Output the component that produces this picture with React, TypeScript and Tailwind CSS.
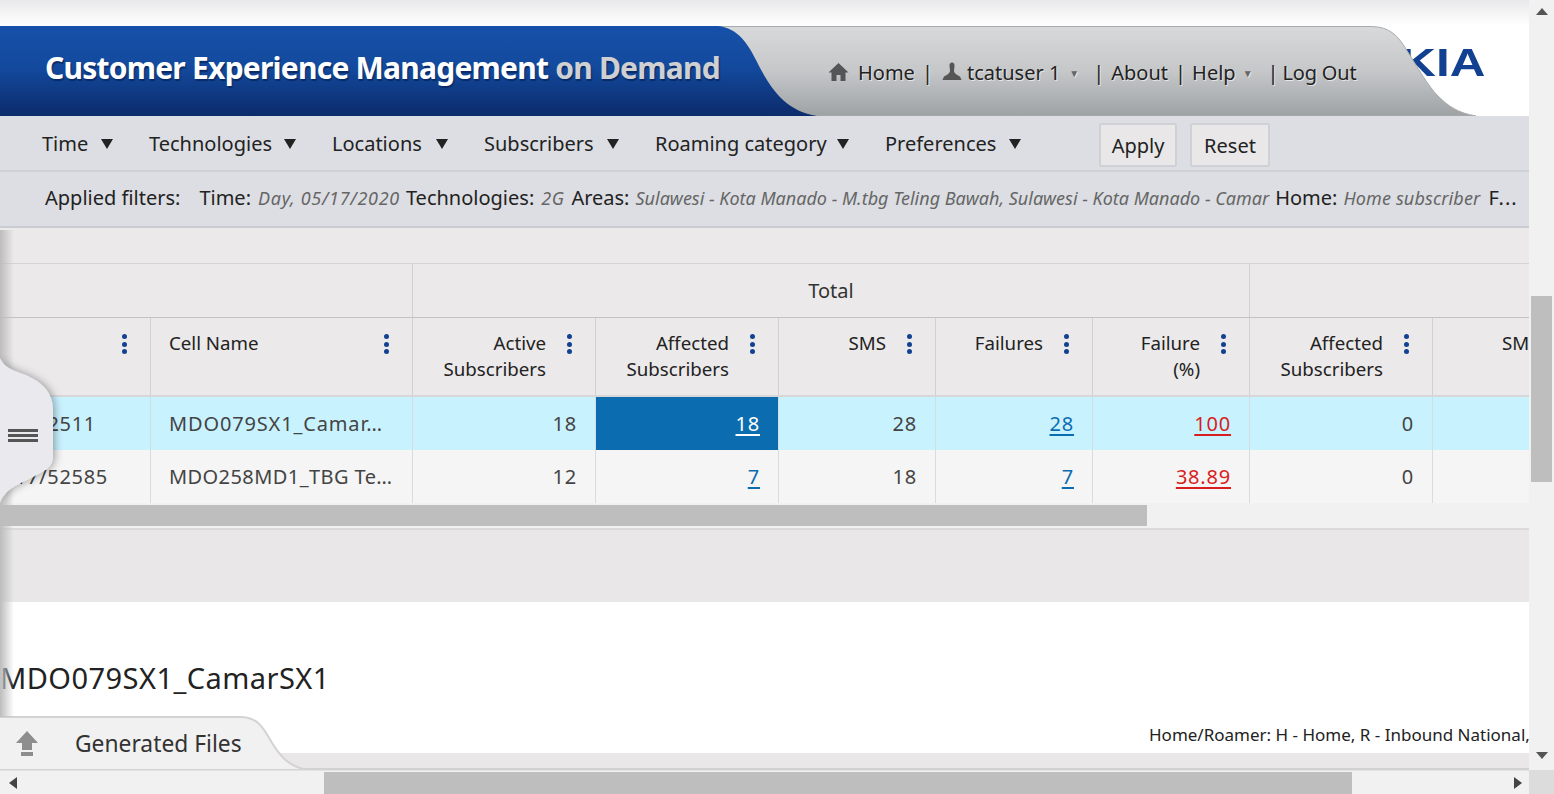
import { Fragment, type ReactNode } from 'react'

const font = { fontFamily: '"Noto Sans", "Open Sans", sans-serif' }

const menus = [
  ['Time', 'w-[47px]'],
  ['Technologies', 'w-[123px]'],
  ['Locations', 'w-[92px]'],
  ['Subscribers', 'w-[111px]'],
  ['Roaming category', 'w-[170px]'],
  ['Preferences', 'w-[112px]'],
]

const filters = [
  ['Time:', 'Day, 05/17/2020', 'mr-[7px]', 'mr-[6px] tracking-[0.7px]'],
  ['Technologies:', '2G', 'mr-[7px]', 'mr-[7px] tracking-[0.5px]'],
  ['Areas:', 'Sulawesi - Kota Manado - M.tbg Teling Bawah, Sulawesi - Kota Manado - Camar', 'mr-[6px]', 'mr-[6px]'],
  ['Home:', 'Home subscriber', 'mr-[6px]', 'mr-[8px] tracking-[0.15px]'],
]

const colGrid = 'grid grid-cols-[151px_262px_183px_183px_157px_157px_157px_183px_96px]'

function Dots() {
  return (
    <span className="flex w-[5px] flex-col gap-[2.5px] pt-1">
      <i className="size-[5px] rounded-full bg-[#124191]" />
      <i className="size-[5px] rounded-full bg-[#124191]" />
      <i className="size-[5px] rounded-full bg-[#124191]" />
    </span>
  )
}

function HeadCell({ children, left }: { children?: ReactNode; left?: boolean }) {
  return (
    <div className="flex h-[77px] justify-end gap-[21px] overflow-hidden border-r border-[#d2d0d2] pr-[23px] pt-[12px] text-[18.7px] leading-[26px] text-[#222]">
      <div className={left ? 'flex-1 pl-[18px] text-left' : 'text-right'}>{children}</div>
      <Dots />
    </div>
  )
}

function Num({ v, link, red, active }: { v: string; link?: boolean; red?: boolean; active?: boolean }) {
  const color = active ? 'text-white bg-[#0b6db0]' : red ? 'text-[#d81e1e]' : link ? 'text-[#0b6db0]' : 'text-[#444]'
  return (
    <div className={`flex items-center justify-end border-r border-[#d6dde0] pr-[18px] text-[20px] tracking-[0.8px] ${color}`}>
      <span className={link || red ? 'underline underline-offset-[3px]' : ''}>{v}</span>
    </div>
  )
}

function Row({ bg, id, idPad, cell, cellTrack, vals }: { bg: string; id: string; idPad: string; cell: string; cellTrack: string; vals: ReactNode }) {
  return (
    <div className={`${colGrid} h-[53px] ${bg}`}>
      <div className={`flex items-center justify-end overflow-hidden whitespace-nowrap border-r border-[#d6dde0] text-[20px] tracking-[0.7px] text-[#444] ${idPad}`}>{id}</div>
      <div className={`flex items-center border-r border-[#d6dde0] pl-[18px] text-[20px] text-[#444] ${cellTrack}`}>{cell}</div>
      {vals}
      <div />
    </div>
  )
}

export default function App() {
  return (
    <div className="relative flex h-[794px] w-[1554px] overflow-hidden bg-white" style={font}>
      <div className="flex w-[1529px] flex-col">
        <div className="h-[26px] bg-gradient-to-b from-[#e9e9eb] to-white" />

        <header className="relative h-[90px]">
          {/* logo sits behind the grey tab, only the end of it shows */}
          <span className="absolute right-[44px] top-[15px] origin-right scale-x-[1.3] font-['Liberation_Sans'] text-[38px] font-bold leading-[44px] text-[#124191]">KIA</span>
          <svg className="absolute inset-0" width="1529" height="90" viewBox="0 0 1529 90">
            <defs>
              <linearGradient id="blue" x1="0" y1="0" x2="0" y2="1">
                <stop offset="0" stopColor="#1650a8" />
                <stop offset="0.45" stopColor="#134a9e" />
                <stop offset="1" stopColor="#0c2b6b" />
              </linearGradient>
              <linearGradient id="gray" x1="0" y1="0" x2="0" y2="1">
                <stop offset="0" stopColor="#d8d9db" />
                <stop offset="0.5" stopColor="#c5c7c9" />
                <stop offset="1" stopColor="#9ea2a5" />
              </linearGradient>
            </defs>
            <path d="M700 0.5H1372C1390 1 1398 10 1406 23C1418 42 1428 60 1438 70C1448 80 1458 87 1476 90H700Z" fill="url(#gray)" stroke="#a8aaac" />
            <path d="M0 0H718C738 2 748 18 756 34C770 62 785 85 817 90H0Z" fill="url(#blue)" />
          </svg>
          <div className="relative flex h-full items-start">
            <h1 className="ml-[45px] mt-[20px] text-[30px] font-bold leading-[44px] tracking-[-0.77px] text-white [text-shadow:1px_2px_1px_#0a2a66]">
              Customer Experience Management <span className="text-[#cfd0d2]">on Demand</span>
            </h1>
            <nav className="absolute left-[828px] top-[33px] flex items-center text-[20px] leading-[28px] text-[#222] [text-shadow:1px_1px_0_#e5e5e5]">
              <svg width="21" height="20" viewBox="0 0 21 20" className="mb-[3px] mr-[9px]" fill="#555">
                <path d="M10.5 1 20.5 10.5H17.5V19H12.500V13H8.500V19H3.500V10.500H.5Z" />
              </svg>
              <span>Home</span>
              <span className="ml-[7px] mr-[9px]">|</span>
              <svg width="20" height="20" viewBox="0 0 20 20" className="mb-[3px] mr-[5px]" fill="#555">
                <path d="M7.500 3.500C7.500 1.500 8.500 0.500 10 0.500S12.500 1.500 12.500 3.500 12 7 12 9C12 11 15 13 18 14.500L19.500 18H.5L2 14.500C5 13 8 11 8 9 8 7 7.500 5.500 7.500 3.500Z" />
              </svg>
              <span>tcatuser 1</span>
              <span className="ml-[9px] mr-[14px] text-[10px] text-[#666]">▼</span>
              <span className="mr-[7px]">|</span>
              <span>About</span>
              <span className="ml-[7px] mr-[6px]">|</span>
              <span>Help</span>
              <span className="ml-[7px] mr-[15px] text-[10px] text-[#666]">▼</span>
              <span className="mr-[4px]">|</span>
              <span className="-tracking-[0.2px]">Log Out</span>
            </nav>
          </div>
        </header>

        <div className="flex h-[56px] items-start border-b-2 border-[#cdd0d6] bg-[#dcdee3] text-[20px] text-[#222]">
          <div className="ml-[42px] mt-[12px] flex w-[1057px] gap-[36px] leading-[32px]">
            {menus.map(([m, w]) => (
              <span key={m} className="flex items-center gap-[12px]">
                <span className={`whitespace-nowrap ${w}`}>{m}</span>
                <span className="size-0 border-x-[6px] border-t-[10px] border-x-transparent border-t-[#222]" />
              </span>
            ))}
          </div>
          <button className="mt-[7px] h-[44px] w-[78px] rounded-[2px] border-2 border-[#cfd1d6] bg-[#e9e7e8] pt-[2px] text-[20px]">Apply</button>
          <button className="ml-[13px] mt-[7px] h-[44px] w-[80px] rounded-[2px] border-2 border-[#cfd1d6] bg-[#e9e7e8] pt-[2px] text-[20px]">Reset</button>
        </div>

        <div className="flex h-[56px] items-center whitespace-nowrap border-b-2 border-[#c9ccd2] bg-[#dcdee3] pb-[2px] pl-[45px] text-[20px] text-[#222]">
          <span className="mr-[19px]">Applied filters:</span>
          {filters.map(([k, v, labelCls, valueCls]) => (
            <Fragment key={k}>
              <span className={labelCls}>{k}</span>
              <span className={`text-[18px] italic text-[#666] ${valueCls}`}>{v}</span>
            </Fragment>
          ))}
          <span className="tracking-[1px]">F...</span>
        </div>

        <div className="h-[35px] bg-[#ebe9ea]" />

        <div className="border-t border-[#d5d3d5] bg-[#ebe9ea]">
          <div className={`${colGrid} h-[54px] border-b border-[#c4c2c4]`}>
            <div className="col-span-2 border-r border-[#d2d0d2]" />
            <div className="col-span-5 flex items-center justify-center border-r border-[#d2d0d2] pt-[1px] text-[20px] text-[#333]">Total</div>
            <div className="col-span-2" />
          </div>
          <div className={`${colGrid} border-b-2 border-[#d8d6d8]`}>
            <HeadCell />
            <HeadCell left>Cell Name</HeadCell>
            <HeadCell>Active<br />Subscribers</HeadCell>
            <HeadCell>Affected<br />Subscribers</HeadCell>
            <HeadCell>SMS</HeadCell>
            <HeadCell>Failures</HeadCell>
            <HeadCell>Failure<br />(%)</HeadCell>
            <HeadCell>Affected<br />Subscribers</HeadCell>
            <div className="overflow-hidden whitespace-nowrap pl-[69px] pt-[12px] text-[18.7px] leading-[26px] text-[#222]">SMS</div>
          </div>
        </div>

        <Row
          bg="bg-[#c9f2ff]"
          id="510/2511"
          idPad="pr-[54px]"
          cell="MDO079SX1_Camar…"
          cellTrack="tracking-[0.85px]"
          vals={
            <>
              <Num v="18" />
              <Num v="18" link active />
              <Num v="28" />
              <Num v="28" link />
              <Num v="100" red />
              <Num v="0" />
            </>
          }
        />
        <Row
          bg="bg-[#f5f5f5]"
          id="17/52585"
          idPad="pr-[42px]"
          cell="MDO258MD1_TBG Te…"
          cellTrack="tracking-[0.42px]"
          vals={
            <>
              <Num v="12" />
              <Num v="7" link />
              <Num v="18" />
              <Num v="7" link />
              <Num v="38.89" red />
              <Num v="0" />
            </>
          }
        />

        <div className="h-[25px] bg-[#f1f1f1] pt-[2px]">
          <div className="h-[21px] w-[1147px] bg-[#bebebe]" />
        </div>
        <div className="h-[74px] border-t-2 border-[#dcdadc] bg-[#e9e7e8]" />

        <div className="relative flex-1 overflow-hidden bg-white">
          <div className="pt-[58px] text-[29px] leading-[36px] tracking-[0.45px] text-[#222]">MDO079SX1_CamarSX1</div>
          <div className="absolute left-[1149px] top-[121px] whitespace-nowrap text-[17px] leading-[24px] text-[#222]">Home/Roamer: H - Home, R - Inbound National, Inbound</div>
          <div className="absolute inset-x-0 top-[151px] h-[17px] border-b-2 border-[#d2d0d2] bg-[#e9e7e8]" />
          <svg className="absolute left-0 top-[114px]" width="310" height="54" viewBox="0 0 310 54" fill="#f1f1f1">
            <path d="M-3 1H240C256 1 262 10 268 20C278 38 288 52 310 54H-3Z" stroke="#d4d2d4" strokeWidth="2" />
          </svg>
          <div className="absolute left-[15px] top-[128px] flex items-center">
            <svg width="24" height="26" viewBox="0 0 24 26" fill="#8d8d8d">
              <path d="M12 0 23 12H17V19H7V12H1Z" />
              <rect x="6" y="21" width="12" height="4" />
            </svg>
            <span className="ml-[36px] text-[22.8px] leading-[28px] text-[#333]">Generated Files</span>
          </div>
        </div>

        <div className="relative flex h-[24px] items-center border-t border-[#e3e3e3] bg-[#f1f1f1]">
          <span className="ml-[9px] size-0 border-y-[6px] border-r-[8px] border-y-transparent border-r-[#444]" />
          <div className="ml-[307px] h-[22px] w-[1028px] bg-[#bebebe]" />
          <span className="ml-[162px] size-0 border-y-[6px] border-l-[8px] border-y-transparent border-l-[#444]" />
        </div>
      </div>

      <aside className="flex w-[25px] flex-col bg-[#f1f1f1]">
        <div className="flex h-[296px] justify-center pt-[8px]">
          <span className="size-0 border-x-[6px] border-b-[7px] border-x-transparent border-b-[#555]" />
        </div>
        <div className="ml-[2px] h-[186px] w-[21px] bg-[#bebebe]" />
        <div className="flex flex-1 justify-center pt-[270px]">
          <span className="size-0 border-x-[6px] border-t-[7px] border-x-transparent border-t-[#555]" />
        </div>
        <div className="h-[24px] bg-[#dcdcdc]" />
      </aside>

      <div className="pointer-events-none absolute left-0 top-[230px] h-[487px] w-[14px] bg-gradient-to-r from-[#bdbdbd] to-transparent" />

      <svg className="absolute left-0 top-[355px]" width="70" height="150" viewBox="0 0 70 150">
        <defs>
          <filter id="soft" x="-30%" y="-10%" width="160%" height="120%">
            <feDropShadow dx="2" dy="0" stdDeviation="4" floodColor="#000" floodOpacity="0.35" />
          </filter>
        </defs>
        <path d="M0 3C4 12 12 15 20 18C34 23 53 32 53 55V102C53 112 44 116 33 122C22 128 6 132 0 148Z" fill="#e9e9ee" filter="url(#soft)" />
        <rect x="8" y="74" width="30" height="3" fill="#555" />
        <rect x="8" y="79" width="30" height="3" fill="#555" />
        <rect x="8" y="84" width="30" height="3" fill="#555" />
      </svg>
    </div>
  )
}
